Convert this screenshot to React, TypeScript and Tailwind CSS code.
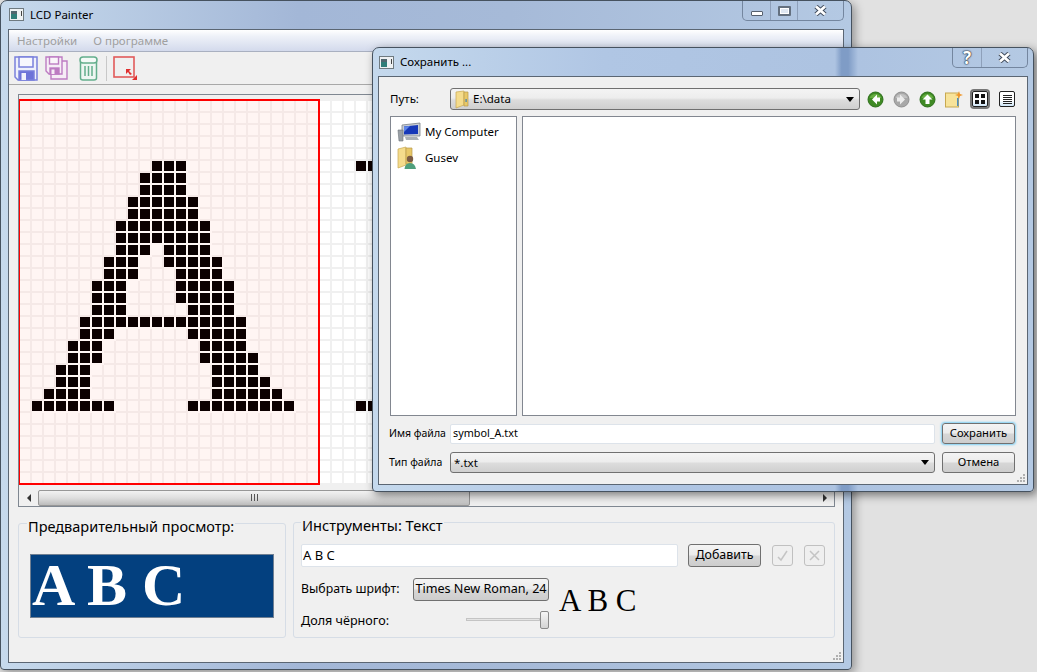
const ROWS = 32;
const COLS = 68;

// black cells of the bitmap: row -> [from, to] column ranges
const blackCells: Record<number, [number, number][]> = {
  5: [[11, 13], [28, 29]],
  6: [[10, 13]],
  7: [[10, 13]],
  8: [[9, 14]],
  9: [[9, 14]],
  10: [[8, 15]],
  11: [[8, 15]],
  12: [[8, 10], [12, 15]],
  13: [[7, 9], [12, 16]],
  14: [[7, 9], [13, 16]],
  15: [[6, 8], [13, 17]],
  16: [[6, 8], [13, 17]],
  17: [[6, 8], [14, 17]],
  18: [[5, 18]],
  19: [[5, 7], [14, 18]],
  20: [[4, 6], [15, 18]],
  21: [[4, 6], [15, 19]],
  22: [[3, 5], [16, 19]],
  23: [[3, 5], [16, 20]],
  24: [[2, 5], [16, 21]],
  25: [[1, 7], [14, 22], [28, 29]],
};

function isBlack(r: number, c: number) {
  return (blackCells[r] ?? []).some(([a, b]) => c >= a && c <= b);
}

function PixelGrid() {
  const cells = [];
  for (let r = 0; r < ROWS; r++) {
    for (let c = 0; c < COLS; c++) {
      const pink = c <= 24;
      let cls = pink ? "bg-[#fff5f3] border-[#f5e9e7]" : "bg-white border-[#f0f0f0]";
      if (isBlack(r, c)) cls = pink ? "bg-[#0c0000] border-[#fff5f3]" : "bg-[#0c0000] border-[#f8f8f8]";
      cells.push(<div key={r + "-" + c} className={`w-[12px] h-[12px] border-r-2 border-b-2 ${cls}`} />);
    }
  }
  return (
    <div className="relative grid grid-cols-[repeat(68,12px)] w-[816px]">
      {cells}
      <div className="absolute -left-[2px] -top-[2px] w-[302px] h-[386px] border-2 border-[#ff0000]" />
    </div>
  );
}

function AppIcon() {
  return (
    <svg width="15" height="13" viewBox="0 0 15 13">
      <rect x="0.5" y="0.5" width="14" height="12" fill="#eef1f3" stroke="#6f7a80" />
      <rect x="2" y="3" width="6" height="8" fill="#2f7d78" />
      <rect x="2" y="3" width="6" height="3" fill="#50666e" />
      <rect x="12" y="3" width="1" height="5" fill="#444" />
    </svg>
  );
}

function CtrlGlyph({ kind }: { kind: "min" | "max" | "close" | "help" }) {
  if (kind === "min")
    return <div className="w-[12px] h-[5px] mt-[6px] bg-white border border-[#56606e] rounded-[1px]" />;
  if (kind === "max")
    return <div className="w-[13px] h-[10px] border-[2px] border-[#64707f] bg-[#dfe7f2] shadow-[inset_0_0_0_1px_#fff] rounded-[1px]" />;
  if (kind === "help")
    return <span className="text-[17px] leading-none font-bold text-white [text-shadow:0_0_2px_#1f2a3a,0_0_1px_#1f2a3a,0_0_1px_#1f2a3a]">?</span>;
  return (
    <svg width="13" height="11" viewBox="0 0 13 11">
      <path d="M2 1.5 L11 9.5 M11 1.5 L2 9.5" stroke="#3f4a5a" strokeWidth="4.6" />
      <path d="M2 1.5 L11 9.5 M11 1.5 L2 9.5" stroke="#fff" strokeWidth="2.8" />
    </svg>
  );
}

function Arrow({ dir, gray }: { dir: "left" | "right" | "up"; gray?: boolean }) {
  const d =
    dir === "left"
      ? "M10 3.5 L5 8.5 L10 13.5 V10.5 H13 V6.5 H10 Z"
      : dir === "right"
        ? "M7 3.5 L12 8.5 L7 13.5 V10.5 H4 V6.5 H7 Z"
        : "M8.5 3.5 L13.5 8.5 H10.5 V13 H6.5 V8.5 H3.5 Z";
  return (
    <svg width="17" height="17" viewBox="0 0 17 17">
      <circle cx="8.5" cy="8.5" r="7.5" fill={gray ? "#a8a8a8" : "#3f8a24"} stroke={gray ? "#909090" : "#2d6f1b"} />
      <path d="M2.5 7 A6.5 6.5 0 0 1 14.5 7 Z" fill={gray ? "#c2c2c2" : "#65ad40"} />
      <path d={d} fill={gray ? "#ececec" : "#fff"} />
    </svg>
  );
}

function SaveIcon() {
  return (
    <svg width="24" height="25" viewBox="0 0 24 25" fill="none" stroke="#7a80dc" strokeWidth="1.5">
      <path d="M1 1 H23 V24 H4 L1 21 Z" fill="#eef0fb" />
      <rect x="5" y="1" width="14" height="10" fill="#f7f7fd" />
      <rect x="5" y="15" width="15" height="9" fill="#6d73d8" />
      <rect x="7.5" y="17" width="4.5" height="7" fill="#f2f2fc" stroke="none" />
    </svg>
  );
}

function SaveAsIcon() {
  return (
    <svg width="23" height="24" viewBox="0 0 23 24" fill="none" stroke="#bd7cc2" strokeWidth="1.4">
      <path d="M6 5 H22 V23 H6 Z" fill="#f6edf6" />
      <path d="M1 1 H17 V18 H4 L1 15 Z" fill="#f6edf6" />
      <rect x="4.5" y="1" width="9" height="7" fill="#faf5fa" />
      <rect x="5" y="12" width="9" height="6" fill="#bd7cc2" />
      <rect x="6.5" y="13.5" width="3" height="4.5" fill="#f6edf6" stroke="none" />
    </svg>
  );
}

function TrashIcon() {
  return (
    <svg width="19" height="25" viewBox="0 0 19 25" fill="none" stroke="#63ae8c" strokeWidth="1.5">
      <path d="M1.5 6 V22 Q1.5 24 4 24 H15 Q17.5 24 17.5 22 V6" fill="#eef6f2" />
      <rect x="1" y="1" width="17" height="6" rx="3" fill="#f4faf7" />
      <path d="M6 10 V20 M9.5 10 V20 M13 10 V20" />
    </svg>
  );
}

function ResizeIcon() {
  return (
    <svg width="25" height="25" viewBox="0 0 25 25" fill="none">
      <rect x="1" y="1" width="20" height="20" stroke="#e25a5a" strokeWidth="1.6" />
      <path d="M13 13 H18 L16 15 L19 18 L17 19 L15 16 L13 18 Z" fill="#e03030" />
      <path d="M24 19 V24 H19 Z" fill="#e03030" />
    </svg>
  );
}

function FolderIcon() {
  return (
    <svg width="14" height="19" viewBox="0 0 14 19">
      <path d="M1 2 L9 1 V15 L1 18 Z" fill="#f5dc8c" stroke="#c7a850" strokeWidth="0.7" />
      <path d="M9 2 H13 V16 H9 Z" fill="#e8c868" stroke="#b8994a" strokeWidth="0.7" />
      <rect x="10.5" y="9" width="1.2" height="3" fill="#3f7fb0" />
    </svg>
  );
}

function ComputerIcon() {
  return (
    <svg width="24" height="20" viewBox="0 0 24 20">
      <path d="M5 3 L23 1 V14 L5 14 Z" fill="#c9ced4" stroke="#7a8088" strokeWidth="0.8" />
      <path d="M7 4.5 L21 3 V12 L7 12.5 Z" fill="#1638b8" />
      <path d="M7 4.5 L13 4 L7 10 Z" fill="#5f86e8" />
      <path d="M1 8 H6 V19 H2 Z" fill="#9aa0a6" stroke="#6c7278" strokeWidth="0.6" />
      <path d="M8 15 H20 L22 18 H9 Z" fill="#aab0b6" />
    </svg>
  );
}

function UserFolderIcon() {
  return (
    <svg width="20" height="24" viewBox="0 0 20 24">
      <path d="M1 3 L9 1 V19 L1 22 Z" fill="#f5dc8c" stroke="#c7a850" strokeWidth="0.7" />
      <path d="M9 2 H15 V18 H9 Z" fill="#e8c868" stroke="#b8994a" strokeWidth="0.7" />
      <circle cx="13" cy="13" r="3.2" fill="#7a5a44" />
      <path d="M7.5 23 Q8 17 13 17 Q18 17 19 23 Z" fill="#4f9f7c" />
    </svg>
  );
}

function NewFolderIcon() {
  return (
    <svg width="18" height="17" viewBox="0 0 18 17">
      <rect x="0.5" y="2" width="13" height="14" fill="#f7e39a" stroke="#c7a850" />
      <rect x="12" y="7" width="1.5" height="8" fill="#4f8fc0" />
      <path d="M14 0 L15 3 L18 4 L15 5 L14 8 L13 5 L10 4 L13 3 Z" fill="#f0962a" />
    </svg>
  );
}

function ViewButton({ kind, active }: { kind: "grid" | "list"; active?: boolean }) {
  return (
    <div
      className={`w-[16px] h-[16px] flex items-center justify-center rounded-[2px] border border-[#222] bg-[linear-gradient(#ffffff,#ffffff_60%,#cfe6f7)] ${active ? "shadow-[0_0_0_2px_#777]" : ""}`}
    >
      {kind === "grid" ? (
        <svg width="10" height="10" viewBox="0 0 10 10">
          <path d="M0 0h4v4h-4zM6 0h4v4h-4zM0 6h4v4h-4zM6 6h4v4h-4z" fill="#111" />
        </svg>
      ) : (
        <svg width="9" height="9" viewBox="0 0 9 9">
          <path d="M0 .5h9M0 2.5h9M0 4.5h9M0 6.5h9M0 8.5h9" stroke="#222" />
        </svg>
      )}
    </div>
  );
}

function Grip() {
  return (
    <svg width="10" height="10" viewBox="0 0 10 10" fill="#b0b0b0">
      <path d="M7 1h2v2h-2zM4 4h2v2h-2zM7 4h2v2h-2zM1 7h2v2h-2zM4 7h2v2h-2zM7 7h2v2h-2z" />
    </svg>
  );
}

function ComboArrow() {
  return <div className="w-0 h-0 border-x-[4px] border-x-transparent border-t-[5px] border-t-black" />;
}

const buttonCls =
  "flex items-center justify-center rounded-[3px] border border-[#707070] bg-[linear-gradient(#f4f4f4,#ececec_45%,#d6d6d6_55%,#cdcdcd)]";
const comboCls =
  "flex items-center rounded-[3px] border border-[#707070] bg-[linear-gradient(#f4f4f4,#ededed_45%,#dcdcdc_55%,#cfcfcf)]";

function ScrollBar() {
  return (
    <div className="flex items-center h-[17px] bg-[#f0f0f0] shrink-0">
      <div className="w-[19px] flex justify-center">
        <div className="w-0 h-0 border-y-[4px] border-y-transparent border-r-[4px] border-r-[#333]" />
      </div>
      <div className="w-[432px] h-[16px] flex items-center justify-center rounded-[2px] border border-[#979797] bg-[linear-gradient(#f2f2f2,#dedede_50%,#bcbcbc)]">
        <svg width="7" height="7" viewBox="0 0 7 7">
          <path d="M.5 0v7M3.5 0v7M6.5 0v7" stroke="#555" />
        </svg>
      </div>
      <div className="flex-1" />
      <div className="w-[19px] flex justify-center">
        <div className="w-0 h-0 border-y-[4px] border-y-transparent border-l-[4px] border-l-[#333]" />
      </div>
    </div>
  );
}

function MainWindow() {
  return (
    <div className="absolute left-0 top-0 w-[852px] h-[670px] flex flex-col rounded-t-[7px] rounded-b-[4px] border border-[#46525f] px-[7px] pb-[6px] bg-[linear-gradient(90deg,#c6d9ec,#a3b7d7_35%,#a6bad8_60%,#b4c9e3)] shadow-[3px_3px_10px_rgba(0,0,0,0.35)]">
      <div className="relative h-[28px] shrink-0 flex items-center gap-[6px] pl-[1px] pb-[1px] text-[11.5px]">
        <AppIcon />
        <span>LCD Painter</span>
        <div className="absolute right-0 top-0 w-[102px] h-[20px] flex rounded-b-[5px] border border-t-0 border-[#74869f] divide-x divide-[#8ea0ba]">
          <div className="w-[28px] flex justify-center pt-[4px]"><CtrlGlyph kind="min" /></div>
          <div className="w-[27px] flex justify-center pt-[5px]"><CtrlGlyph kind="max" /></div>
          <div className="flex-1 flex justify-center pt-[4px]"><CtrlGlyph kind="close" /></div>
        </div>
      </div>

      <div className="flex-1 flex flex-col min-h-0 border border-[#5b6673] bg-[#f0f0f0]">
        <div className="h-[22px] shrink-0 flex items-center gap-[16px] pl-[8px] text-[11.5px] text-[#a0a0a0] border-b border-[#a9b0c0] bg-[linear-gradient(#ffffff,#eef1f8_30%,#d3daec)]">
          <span>Настройки</span>
          <span>О программе</span>
        </div>
        <div className="h-[33px] shrink-0 flex items-center pl-[5px] border-b border-[#a8a8a8]">
          <SaveIcon />
          <div className="ml-[7px]"><SaveAsIcon /></div>
          <div className="ml-[11px]"><TrashIcon /></div>
          <div className="ml-[8px] w-px h-[25px] bg-[#c8c8c8]" />
          <div className="ml-[6px]"><ResizeIcon /></div>
        </div>

        <div className="mt-[9px] ml-[9px] mr-[8px] h-[413px] shrink-0 flex flex-col border border-[#7f8791] overflow-hidden bg-[#f0f0f0]">
          <div className="flex-1 min-h-0 overflow-hidden pl-[1px] pt-[6px]">
            <PixelGrid />
          </div>
          <ScrollBar />
        </div>

        <div className="mt-[3px] ml-[9px] flex gap-[7px]">
          <fieldset className="w-[268px] h-[128px] border border-[#d6dde6] rounded-[3px] px-[11px]">
            <legend className="-ml-[3px] px-px pt-[6px] text-[14.5px] leading-[20px]">Предварительный просмотр:</legend>
            <div className="mt-[18px] w-[244px] h-[64px] border border-[#6f7f92] bg-[#03407f] pl-[1px] text-white font-bold text-[60px] leading-[60px] whitespace-pre [font-family:'Liberation_Serif',serif]">
              A B C
            </div>
          </fieldset>

          <fieldset className="w-[542px] h-[128px] border border-[#d6dde6] rounded-[3px] pl-[7px]">
            <legend className="px-px pt-[5px] text-[14.6px] leading-[20px]">Инструменты: Текст</legend>
            <div className="mt-[9px] flex items-center h-[23px]">
              <div className="w-[377px] h-[23px] flex items-center pl-[1px] bg-white border border-[#dde3ea] rounded-[2px] text-[13px]">A B C</div>
              <div className={`${buttonCls} ml-[10px] w-[73px] h-[23px] text-[12.4px]`}>Добавить</div>
              <div className="ml-[11px] w-[21px] h-[21px] flex items-center justify-center border border-[#c0c0c0] rounded-[3px] bg-[#efefef]">
                <svg width="13" height="13" viewBox="0 0 13 13" fill="none" stroke="#c4c4c4" strokeWidth="1.5">
                  <path d="M2 8 L5 11 L11 2" />
                </svg>
              </div>
              <div className="ml-[11px] w-[21px] h-[21px] flex items-center justify-center border border-[#c0c0c0] rounded-[3px] bg-[#efefef]">
                <svg width="13" height="13" viewBox="0 0 13 13" fill="none" stroke="#c4c4c4" strokeWidth="1.5">
                  <path d="M2 2 L11 11 M11 2 L2 11" />
                </svg>
              </div>
            </div>

            <div className="mt-[11px] flex">
              <div className="w-[248px] text-[12.3px]">
                <div className="flex items-center h-[23px]">
                  <span className="w-[112px]">Выбрать шрифт:</span>
                  <div className={`${buttonCls} w-[136px] h-[23px] whitespace-nowrap text-[12.6px]`}>Times New Roman, 24</div>
                </div>
                <div className="mt-[9px] flex items-center h-[19px]">
                  <span className="w-[165px] pt-[4px] text-[12.6px]">Доля чёрного:</span>
                  <div className="w-[74px] h-[3px] bg-[#e4e4e4] border border-[#c4c4c4]" />
                  <div className="w-[9px] h-[18px] rounded-[2px] border border-[#8a8a8a] bg-[linear-gradient(#f6f6f6,#d4d4d4)]" />
                </div>
              </div>
              <div className="ml-[10px] mt-[5px] text-[31px] leading-[36px] whitespace-pre [font-family:'Liberation_Serif',serif]">A B C</div>
            </div>
          </fieldset>
        </div>

        <div className="flex-1 flex items-end justify-end pr-[1px] pb-[1px]">
          <Grip />
        </div>
      </div>
    </div>
  );
}

function SaveDialog() {
  return (
    <div className="absolute left-[372px] top-[47px] w-[662px] h-[445px] flex flex-col rounded-t-[7px] rounded-b-[4px] border border-[#46525f] px-[5px] pb-[6px] bg-[linear-gradient(90deg,#c5d9ed,#b0c6e4_35%,#adc3e1_70%,#7f9cc6_71%,#7f9cc6_72%,#adc3e1_73.5%,#b4c9e3)] shadow-[3px_3px_10px_rgba(0,0,0,0.5)]">
      <div className="relative h-[28px] shrink-0 flex items-center gap-[6px] pl-[1px] text-[11.5px]">
        <AppIcon />
        <span>Сохранить ...</span>
        <div className="absolute right-0 top-0 w-[76px] h-[20px] flex rounded-b-[5px] border border-t-0 border-[#74869f] divide-x divide-[#8ea0ba]">
          <div className="w-[29px] flex justify-center items-center"><CtrlGlyph kind="help" /></div>
          <div className="flex-1 flex justify-center pt-[4px]"><CtrlGlyph kind="close" /></div>
        </div>
      </div>

      <div className="flex-1 flex flex-col min-h-0 border border-[#5b6673] bg-[#f0f0f0] pl-[11px] pr-[11px] pt-[11px] text-[11.5px]">
        <div className="flex items-center h-[22px]">
          <span className="w-[60px]">Путь:</span>
          <div className={`${comboCls} w-[410px] h-[22px] pl-[4px] pr-[5px] gap-[4px]`}>
            <FolderIcon />
            <span className="flex-1">E:\data</span>
            <ComboArrow />
          </div>
          <div className="ml-[7px]"><Arrow dir="left" /></div>
          <div className="ml-[9px]"><Arrow dir="right" gray /></div>
          <div className="ml-[9px]"><Arrow dir="up" /></div>
          <div className="ml-[9px]"><NewFolderIcon /></div>
          <div className="ml-[9px]"><ViewButton kind="grid" active /></div>
          <div className="ml-[11px]"><ViewButton kind="list" /></div>
        </div>

        <div className="mt-[6px] flex gap-[5px] h-[300px] shrink-0">
          <div className="w-[127px] border border-[#828790] bg-white pl-[6px] pt-[5px]">
            <div className="flex items-center h-[20px] gap-[4px]">
              <ComputerIcon />
              <span>My Computer</span>
            </div>
            <div className="flex items-center h-[26px] mt-[3px] gap-[8px]">
              <UserFolderIcon />
              <span>Gusev</span>
            </div>
          </div>
          <div className="w-[494px] border border-[#828790] bg-white" />
        </div>

        <div className="mt-[7px] flex items-center h-[21px]">
          <span className="w-[60px] text-[10.5px] -ml-px mr-px">Имя файла</span>
          <div className="w-[485px] h-[20px] flex items-center pl-[2px] bg-white border border-[#dde3ea] rounded-[2px] text-[10.8px]">symbol_A.txt</div>
          <div className={`${buttonCls} ml-[7px] w-[73px] h-[21px] text-[11.2px] border-[#3c7fb1] shadow-[0_0_2px_1px_#7fd0f5]`}>Сохранить</div>
        </div>
        <div className="mt-[8px] flex items-center h-[21px]">
          <span className="w-[60px] text-[10.5px] -ml-px mr-px">Тип файла</span>
          <div className={`${comboCls} w-[485px] h-[21px] pl-[3px] pr-[5px] justify-between`}>
            <span>*.txt</span>
            <ComboArrow />
          </div>
          <div className={`${buttonCls} ml-[7px] w-[73px] h-[21px] text-[11.2px]`}>Отмена</div>
        </div>

        <div className="flex-1 flex items-end justify-end -mr-[10px] pb-px">
          <Grip />
        </div>
      </div>
    </div>
  );
}

export default function App() {
  return (
    <div className="relative w-[1037px] h-[672px] overflow-hidden bg-[#e1e1e1] text-black [font-family:'Noto_Sans',sans-serif]">
      <MainWindow />
      <SaveDialog />
    </div>
  );
}
